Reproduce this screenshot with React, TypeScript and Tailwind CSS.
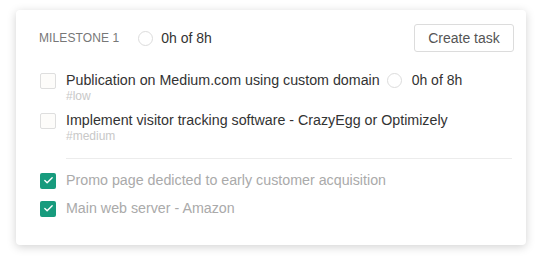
import { Check } from 'lucide-react';

type Task = { id: number; title: string; tag?: string; hours?: string; done: boolean };

const tasks: Task[] = [
  { id: 1, title: 'Publication on Medium.com using custom domain', tag: '#low', hours: '0h of 8h', done: false },
  { id: 2, title: 'Implement visitor tracking software - CrazyEgg or Optimizely', tag: '#medium', done: false },
];

const doneTasks: Task[] = [
  { id: 3, title: 'Promo page dedicted to early customer acquisition', done: true },
  { id: 4, title: 'Main web server - Amazon', done: true },
];

function Ring() {
  return <span className="block w-[15px] h-[15px] rounded-full border border-[#dcdcdc] bg-white shrink-0" />;
}

function Box({ done }: { done: boolean }) {
  if (done) {
    return (
      <span className="w-4 h-4 rounded-[2px] bg-[#179b7d] flex items-center justify-center shrink-0">
        <Check size={11} strokeWidth={3} className="text-white" />
      </span>
    );
  }
  return <span className="block w-4 h-4 rounded-[2px] border border-[#dedede] bg-[#fdfcfa] shrink-0" />;
}

export default function App() {
  return (
    <div className="w-[543px] h-[266px] bg-white pt-[10px] pl-[16px]" style={{ fontFamily: '"Liberation Sans", Arial, sans-serif' }}>
      <div className="w-[510px] h-[235px] bg-white rounded-[4px] shadow-[0_2px_10px_rgba(0,0,0,0.18)] pt-[14px] pl-[23px] pr-[12px]">
        <div className="flex items-center h-[28px]">
          <span className="text-[12px] text-[#777] tracking-[0.1px]">MILESTONE 1</span>
          <span className="ml-[19px]"><Ring /></span>
          <span className="ml-[8px] text-[14px] text-[#333]">0h of 8h</span>
          <div className="flex-1" />
          <button className="w-[100px] h-[28px] border border-[#dcdcdc] rounded-[3px] text-[14px] text-[#555] bg-white">Create task</button>
        </div>

        <div className="mt-[20px] pl-px pr-[2px]">
          {tasks.map((t) => (
            <div key={t.id} className="flex gap-[10px] mb-[8px]">
              <div className="pt-[1px]"><Box done={t.done} /></div>
              <div>
                <div className="flex items-center h-[17px] text-[14.25px] text-[#333]">
                  <span>{t.title}</span>
                  {t.hours && (
                    <>
                      <span className="ml-[7px]"><Ring /></span>
                      <span className="ml-[10px] text-[14px]">{t.hours}</span>
                    </>
                  )}
                </div>
                <div className="h-[15px] leading-[15px] text-[12px] text-[#c8c8c8]">{t.tag}</div>
              </div>
            </div>
          ))}

          <div className="ml-[26px] h-px bg-[#ececec] mt-[14px] mb-[13px]" />

          {doneTasks.map((t) => (
            <div key={t.id} className="flex items-center gap-[10px] h-[17px] mb-[11px]">
              <Box done={t.done} />
              <span className="text-[14.25px] text-[#aaa]">{t.title}</span>
            </div>
          ))}
        </div>
      </div>
    </div>
  );
}
